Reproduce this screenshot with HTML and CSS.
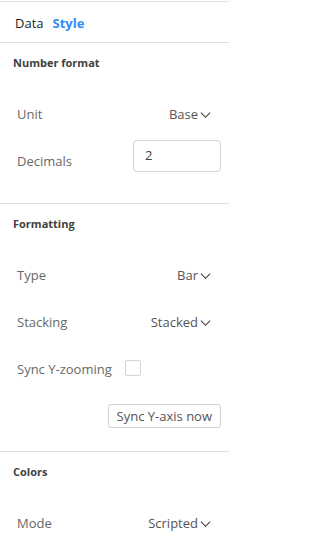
FILE: index.html
```html
<!DOCTYPE html>
<html>
<head>
<meta charset="utf-8">
<link rel="stylesheet" href="styles.css">
</head>
<body>
<div class="panel">
  <div class="tabs">
    <span class="tab">Data</span>
    <span class="tab tab--active">Style</span>
  </div>

  <section class="section section--tall">
    <div class="section-title">Number format</div>
    <div class="row">
      <span class="label">Unit</span>
      <span class="select">Base<svg class="chev" viewBox="0 0 12 8"><path d="M1 1.5 L6 6.5 L11 1.5"/></svg></span>
    </div>
    <div class="row row--field">
      <span class="label">Decimals</span>
      <span class="input">2</span>
    </div>
  </section>

  <section class="section">
    <div class="section-title">Formatting</div>
    <div class="row">
      <span class="label">Type</span>
      <span class="select">Bar<svg class="chev" viewBox="0 0 12 8"><path d="M1 1.5 L6 6.5 L11 1.5"/></svg></span>
    </div>
    <div class="row">
      <span class="label">Stacking</span>
      <span class="select">Stacked<svg class="chev" viewBox="0 0 12 8"><path d="M1 1.5 L6 6.5 L11 1.5"/></svg></span>
    </div>
    <div class="row row--start">
      <span class="label">Sync Y-zooming</span>
      <span class="checkbox"></span>
    </div>
    <div class="row row--end">
      <span class="button">Sync Y-axis now</span>
    </div>
  </section>

  <section class="section section--open">
    <div class="section-title">Colors</div>
    <div class="row">
      <span class="label">Mode</span>
      <span class="select">Scripted<svg class="chev" viewBox="0 0 12 8"><path d="M1 1.5 L6 6.5 L11 1.5"/></svg></span>
    </div>
  </section>
</div>
</body>
</html>
```

FILE: styles.css
```css
html, body {
  margin: 0;
  padding: 0;
  background: #ffffff;
}
body {
  font-family: "Open Sans", "Noto Sans", sans-serif;
  font-size: 13px;
  overflow: hidden;
}
.panel {
  width: 229px;
  margin-top: 1px;
  border-top: 1px solid #e4e4e4;
}
.tabs {
  display: flex;
  align-items: center;
  gap: 9px;
  padding: 2px 0 0 15px;
  border-bottom: 1px solid #e0e0e0;
  box-sizing: border-box;
  height: 41px;
}
.tab {
  color: #1e1e1e;
  font-size: 13px;
}
.tab--active {
  color: #2f8cf7;
  font-weight: 700;
}
.section {
  border-bottom: 1px solid #e0e0e0;
  padding-bottom: 12px;
}
.section--tall {
  padding-bottom: 19px;
}
.section--open {
  border-bottom: none;
}
.section-title {
  height: 39px;
  display: flex;
  align-items: center;
  padding-left: 13px;
  font-size: 11px;
  font-weight: 700;
  color: #404040;
  margin-bottom: 8px;
}
.row {
  height: 47px;
  display: flex;
  align-items: center;
  justify-content: space-between;
  padding: 0 8px 0 17px;
}
.row--start {
  justify-content: flex-start;
  gap: 13px;
}
.row--end {
  justify-content: flex-end;
}
.label {
  color: #686868;
}
.select {
  display: flex;
  align-items: center;
  color: #555555;
  margin-right: 10px;
}
.chev {
  width: 11px;
  height: 8px;
  margin-left: 2px;
  margin-top: 3px;
  fill: none;
  stroke: #333;
  stroke-width: 1.1;
}
.input {
  width: 88px;
  height: 32px;
  box-sizing: border-box;
  border: 1px solid #d4d4d4;
  border-radius: 4px;
  padding: 5px 0 0 11px;
  color: #444;
  display: flex;
  align-items: flex-start;
  line-height: 18px;
  margin-bottom: 9px;
}
.checkbox {
  width: 16px;
  height: 16px;
  border: 1px solid #d4d4d4;
  border-radius: 2px;
  box-sizing: border-box;
  margin-top: -1px;
}
.button {
  height: 24px;
  box-sizing: border-box;
  border: 1px solid #d0d0d0;
  border-radius: 3px;
  padding: 0 8px;
  display: flex;
  align-items: center;
  color: #555555;
}
```
